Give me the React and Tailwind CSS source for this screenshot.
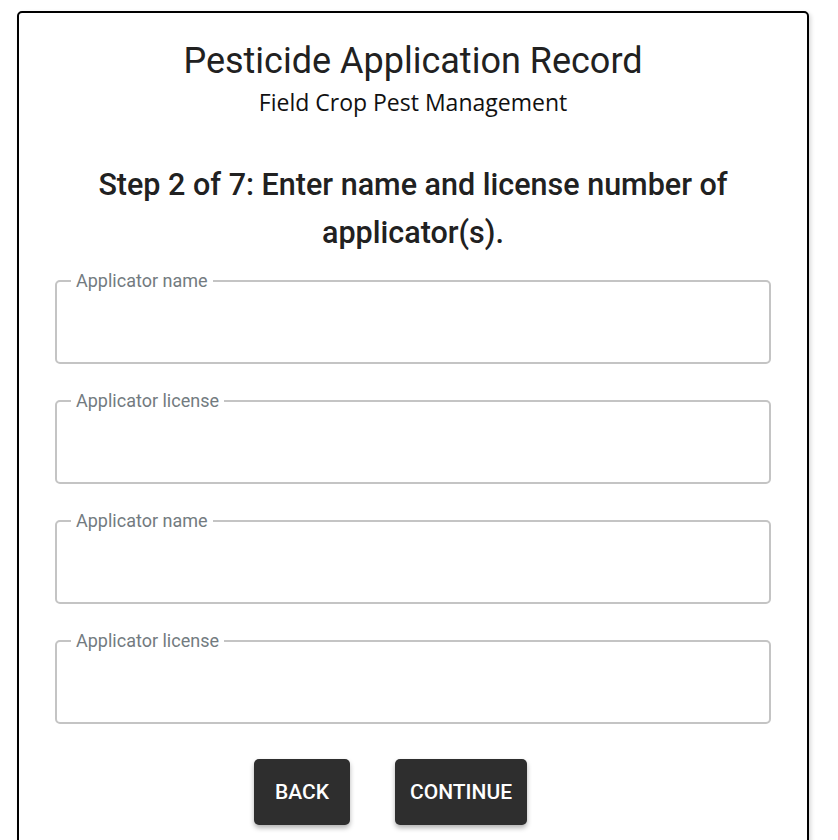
export default function App() {
  const fields = ["Applicator name", "Applicator license", "Applicator name", "Applicator license"];
  return (
    <div className="min-h-[840px] bg-white pt-[11px] pl-[17px]" style={{ fontFamily: "Roboto, 'Liberation Sans', sans-serif" }}>
      <div className="w-[792px] border-2 border-black rounded-[5px] bg-white shadow-[2px_2px_4px_rgba(0,0,0,0.15)] px-[36px] pt-[28px] pb-[40px]">
        <h1 className="text-center text-[36px] leading-[40px] font-normal text-[#212121]">Pesticide Application Record</h1>
        <p className="text-center text-[23px] leading-[30px] mt-[6px] text-[#111]" style={{ fontFamily: "'Open Sans', 'Noto Sans', sans-serif" }}>
          Field Crop Pest Management
        </p>
        <h2 className="text-center text-[30.5px] leading-[48px] font-medium text-[#212121] mt-[44px] px-[30px]">
          Step 2 of 7: Enter name and license number of applicator(s).
        </h2>
        <div className="mt-[14px] flex flex-col gap-[27px]">
          {fields.map((f, i) => (
            <fieldset key={i} className="h-[93px] border-2 border-[#c4c4c4] rounded-[5px] px-[14px] m-0">
              <legend className="px-[5px] text-[18px] leading-[20px] text-[#737b80]">{f}</legend>
            </fieldset>
          ))}
        </div>
        <div className="mt-[35px] flex justify-center gap-[45px] pr-[45px]">
          <button className="h-[66px] w-[96px] rounded-[5px] bg-[#2e2e2e] pt-[2px] text-white text-[21px] font-medium uppercase shadow-[0_3px_5px_rgba(0,0,0,0.3)]">Back</button>
          <button className="h-[66px] w-[132px] rounded-[5px] bg-[#2e2e2e] pt-[2px] text-white text-[21px] font-medium uppercase shadow-[0_3px_5px_rgba(0,0,0,0.3)]">Continue</button>
        </div>
      </div>
    </div>
  );
}
